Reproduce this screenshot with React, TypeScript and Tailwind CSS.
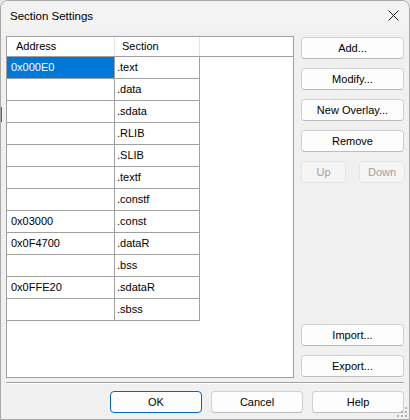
import type { ReactNode } from "react";

type Row = { address: string; section: string };

const rows: Row[] = [
  { address: "0x000E0", section: ".text" },
  { address: "", section: ".data" },
  { address: "", section: ".sdata" },
  { address: "", section: ".RLIB" },
  { address: "", section: ".SLIB" },
  { address: "", section: ".textf" },
  { address: "", section: ".constf" },
  { address: "0x03000", section: ".const" },
  { address: "0x0F4700", section: ".dataR" },
  { address: "", section: ".bss" },
  { address: "0x0FFE20", section: ".sdataR" },
  { address: "", section: ".sbss" },
];

function Btn({ children, className = "", disabled, primary }: { children: ReactNode; className?: string; disabled?: boolean; primary?: boolean }) {
  const tone = disabled
    ? "bg-[#f5f5f5] border-[#e5e5e5] text-[#a0a0a0]"
    : primary
      ? "bg-[#fdfdfd] border-[#0067c0] text-black"
      : "bg-[#fdfdfd] border-[#d0d0d0] border-b-[#bcbcbc] text-black";
  return (
    <button type="button" disabled={disabled} className={`flex h-[22px] items-center justify-center rounded-[4px] border text-[11px] leading-none ${tone} ${className}`}>
      {children}
    </button>
  );
}

function SizeGrip() {
  const dots = [
    [8, 0],
    [4, 4],
    [8, 4],
    [0, 8],
    [4, 8],
    [8, 8],
  ];
  return (
    <svg width="11" height="11" viewBox="0 0 11 11" className="absolute bottom-[1px] right-[1px]" aria-hidden>
      {dots.map(([x, y]) => (
        <rect key={`${x}-${y}`} x={x} y={y} width="2" height="2" fill="#b4b4b4" />
      ))}
    </svg>
  );
}

export default function App() {
  return (
    <div className="h-[420px] w-[410px] bg-[#e6e6e6]" style={{ fontFamily: '"Liberation Sans", Arial, sans-serif' }}>
      <div className="relative flex h-[420px] w-[410px] flex-col overflow-hidden rounded-t-[8px] border border-[#a8a8a8] bg-[#f0f0f0]">
        {/* stray highlight of the window behind */}
        <div className="absolute left-0 top-[106px] h-[15px] w-[1px] bg-[#0078d7]" />

        <div className="flex h-[30px] shrink-0 items-center justify-between bg-[#f3f3f3] pl-[9px] pr-[10px]">
          <span className="mt-[1px] text-[11.5px] text-black">Section Settings</span>
          <svg width="11" height="11" viewBox="0 0 11 11" aria-hidden className="mt-[-1px]">
            <path d="M0.5 0.5 L10.5 10.5 M10.5 0.5 L0.5 10.5" stroke="#1a1a1a" strokeWidth="1" />
          </svg>
        </div>

        <div className="mt-[5px] flex pl-[5px] pr-[5px]">
          <div className="h-[342px] w-[288px] border border-[#a0a0a0] bg-white">
            <div className="flex h-[20px] border-b border-[#a0a0a0] text-[11px] text-black">
              <div className="flex w-[108px] items-center border-r border-[#e5e5e5] pl-[9px]">Address</div>
              <div className="flex w-[85px] items-center border-r border-[#e5e5e5] pl-[7px]">Section</div>
            </div>
            {rows.map((row, i) => (
              <div key={row.section} className="flex h-[22px] text-[11px]">
                <div className={`flex w-[108px] items-center border-b border-r border-[#a0a0a0] pl-[4px] ${i === 0 ? "bg-[#0078d7] text-white" : "text-black"}`}>
                  {row.address}
                </div>
                <div className="flex w-[85px] items-center border-b border-r border-[#a0a0a0] pl-[2px] text-black">{row.section}</div>
              </div>
            ))}
          </div>

          <div className="ml-[7px] flex h-[342px] w-[103px] flex-col justify-between pb-[1px] pt-[1px]">
            <div className="flex flex-col gap-[9px]">
              <Btn>Add...</Btn>
              <Btn>Modify...</Btn>
              <Btn>New Overlay...</Btn>
              <Btn>Remove</Btn>
              <div className="flex justify-between">
                <Btn disabled className="w-[45px]">Up</Btn>
                <Btn disabled className="mr-[-1px] w-[46px]">Down</Btn>
              </div>
            </div>
            <div className="flex flex-col gap-[9px]">
              <Btn>Import...</Btn>
              <Btn>Export...</Btn>
            </div>
          </div>
        </div>

        <div className="mx-[5px] mt-[4px] h-[2px] border-b border-t border-b-white border-t-[#a0a0a0]" />

        <div className="mt-[7px] flex justify-end gap-[9px] pr-[5px]">
          <Btn primary className="w-[92px]">OK</Btn>
          <Btn className="w-[92px]">Cancel</Btn>
          <Btn className="w-[92px]">Help</Btn>
        </div>

        <SizeGrip />
      </div>
    </div>
  );
}
